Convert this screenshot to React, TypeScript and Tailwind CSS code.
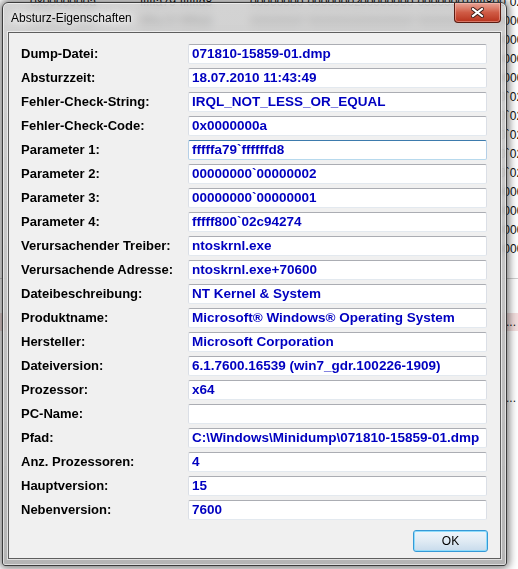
import React from "react";

interface Field {
  label: string;
  value: string;
  focused?: boolean;
}

const fields: Field[] = [
  { label: "Dump-Datei:", value: "071810-15859-01.dmp" },
  { label: "Absturzzeit:", value: "18.07.2010 11:43:49" },
  { label: "Fehler-Check-String:", value: "IRQL_NOT_LESS_OR_EQUAL" },
  { label: "Fehler-Check-Code:", value: "0x0000000a" },
  { label: "Parameter 1:", value: "fffffa79`ffffffd8", focused: true },
  { label: "Parameter 2:", value: "00000000`00000002" },
  { label: "Parameter 3:", value: "00000000`00000001" },
  { label: "Parameter 4:", value: "fffff800`02c94274" },
  { label: "Verursachender Treiber:", value: "ntoskrnl.exe" },
  { label: "Verursachende Adresse:", value: "ntoskrnl.exe+70600" },
  { label: "Dateibeschreibung:", value: "NT Kernel & System" },
  { label: "Produktname:", value: "Microsoft® Windows® Operating System" },
  { label: "Hersteller:", value: "Microsoft Corporation" },
  { label: "Dateiversion:", value: "6.1.7600.16539 (win7_gdr.100226-1909)" },
  { label: "Prozessor:", value: "x64" },
  { label: "PC-Name:", value: "" },
  { label: "Pfad:", value: "C:\\Windows\\Minidump\\071810-15859-01.dmp" },
  { label: "Anz. Prozessoren:", value: "4" },
  { label: "Hauptversion:", value: "15" },
  { label: "Nebenversion:", value: "7600" },
];

// rows of the list window lying behind the dialog
const bgParam4 = [
  "fffff800`02c94274",
  "00000000`00000000",
  "00000000`00000000",
  "00000000`00000000",
  "00000000`00000000",
  "fffff800`02c94274",
  "fffff800`02c94274",
  "fffff800`02c94274",
  "fffff800`02c94274",
  "fffff800`02c94274",
  "00000000`00000000",
  "00000000`00000000",
  "00000000`00000000",
  "00000000`00000000",
];

const Background = () => (
  <div className="absolute inset-0 bg-white font-['Liberation_Sans',Arial,sans-serif] text-[12px] text-[#111]">
    <div className="flex flex-col -mt-[8px]">
      {bgParam4.map((p4, i) => (
        <div key={i} className="flex h-[19px] items-center whitespace-nowrap">
          <span className="w-[140px] shrink-0 overflow-hidden pl-[30px]">0x0000000a</span>
          <span className="w-[110px] shrink-0 overflow-hidden">fffffa79`ffffffd8</span>
          <span className="w-[110px] shrink-0 overflow-hidden">00000000`00000002</span>
          <span className="w-[110px] shrink-0 overflow-hidden">00000000`00000001</span>
          <span className="w-[48px] shrink-0 overflow-hidden">{p4}</span>
        </div>
      ))}
    </div>
    <div className="mt-[20px] border-t border-[#cfcfcf]" />
    <div className="mt-[34px] flex h-[18px] items-center justify-end bg-[#f3dede] pr-[2px]">...</div>
    <div className="mt-[58px] flex h-[18px] items-center justify-end pr-[2px]">...</div>
  </div>
);

const CloseButton = () => (
  <div className="absolute right-[5px] top-0 flex h-[20px] w-[47px] items-center justify-center rounded-b-[4px] border border-t-0 border-[#5a1c12] bg-gradient-to-b from-[#e8a597] via-[#cf5b45] to-[#b8311a] shadow-[inset_0_0_0_1px_rgba(255,200,190,0.45)]">
    <svg width="13" height="11" viewBox="0 0 13 11">
      <path d="M2 2 L11 9 M11 2 L2 9" stroke="#3a1a14" strokeWidth="4" strokeLinecap="square" />
      <path d="M2 2 L11 9 M11 2 L2 9" stroke="#ffffff" strokeWidth="2.2" strokeLinecap="square" />
    </svg>
  </div>
);

const TextBox = ({ value, focused }: { value: string; focused?: boolean }) => (
  <div
    className={`flex h-[20px] items-center overflow-hidden whitespace-nowrap rounded-[2px] border bg-white pl-[3px] text-[13.5px] font-bold text-[#0000c0] ${
      focused
        ? "border-t-[#3d7bad] border-x-[#b5cfe7] border-b-[#b7d9ed]"
        : "border-t-[#abadb3] border-x-[#dbdfe6] border-b-[#e3e9ef]"
    }`}
  >
    {value}
  </div>
);

export default function App() {
  return (
    <div className="relative h-[569px] w-[518px] overflow-hidden font-['Liberation_Sans',Arial,sans-serif]">
      <Background />

      <div className="absolute left-[2px] top-[2px] flex h-[564px] w-[505px] flex-col rounded-t-[6px] rounded-b-[3px] border border-[#3c3c3c] bg-gradient-to-b from-[#c8c8c8]/80 to-[#a8a8a8]/85 shadow-[0_0_9px_2px_rgba(0,0,0,0.55),inset_0_0_0_1px_rgba(255,255,255,0.55)] backdrop-blur-[4px]">
        <div className="relative flex h-[29px] shrink-0 items-center pl-[8px] pt-[1px]">
          <span className="text-[12px] text-black [text-shadow:0_0_6px_#fff,0_0_10px_#fff]">Absturz-Eigenschaften</span>
          <CloseButton />
        </div>

        <div className="mx-[5px] mb-[6px] flex flex-1 flex-col border border-[#5e5e5e] bg-[#f0f0f0] pl-[12px] pr-[12px] pt-[11px] shadow-[0_0_0_1px_rgba(255,255,255,0.6)]">
          <div className="grid grid-cols-[167px_299px] gap-y-[4px]">
            {fields.map((f) => (
              <React.Fragment key={f.label}>
                <div className="flex h-[20px] items-center whitespace-nowrap text-[13px] font-bold text-black">
                  {f.label}
                </div>
                <TextBox value={f.value} focused={f.focused} />
              </React.Fragment>
            ))}
          </div>

          <div className="mt-[10px] flex justify-end">
            <button className="flex h-[22px] w-[75px] items-center justify-center rounded-[3px] border border-[#3599d6] bg-gradient-to-b from-[#eef5fb] via-[#e0ebf4] to-[#c8dbec] text-[12px] text-black shadow-[inset_0_0_0_1px_#8fdcfb]">
              OK
            </button>
          </div>
        </div>
      </div>
    </div>
  );
}
